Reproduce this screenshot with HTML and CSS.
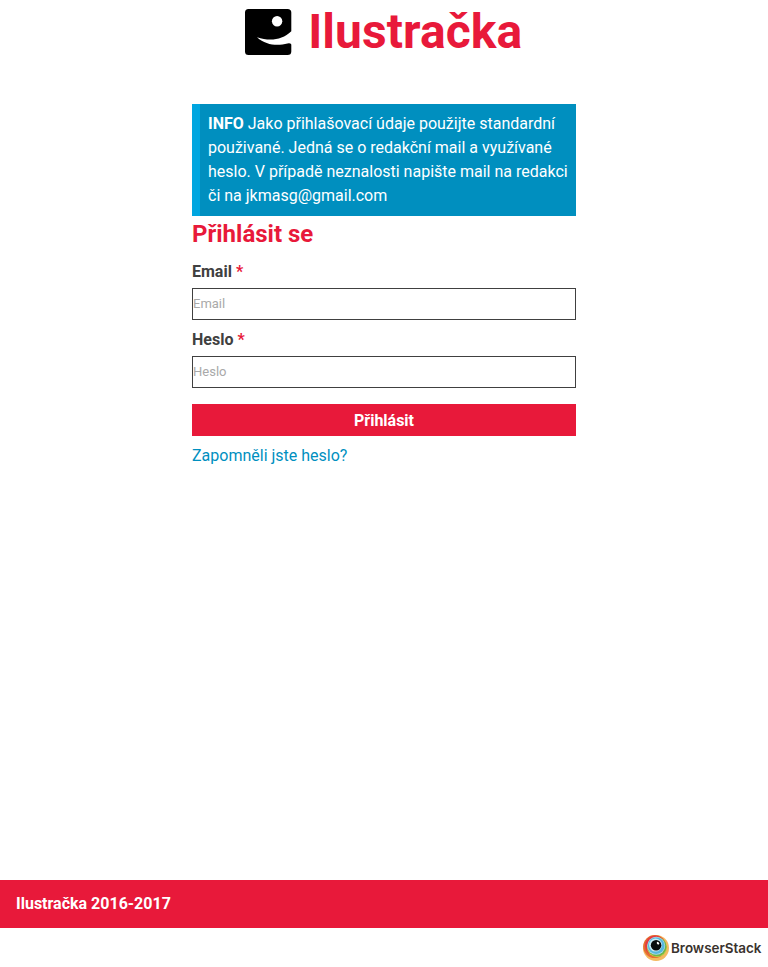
FILE: index.html
```html
<!DOCTYPE html>
<html lang="cs">
<head>
<meta charset="utf-8">
<title>Ilustračka</title>
<link rel="stylesheet" href="styles.css">
</head>
<body>
<header class="header">
  <svg class="logo" viewBox="0 0 48 48" aria-hidden="true">
    <path d="M4 1H43.500Q47.300 1 47.300 4.500V23.200C38 32 26 33.500 13 29.200C22 37.500 34 38 43.500 35.400Q46.500 34.800 47.300 36.500V43.500Q47.300 47 43.500 47H4.500Q1 47 1 43.500V4.500Q1 1 4.500 1Z" fill="#000"/>
    <circle cx="33.100" cy="13.200" r="5.200" fill="#fff"/>
  </svg>
  <h1 class="title">Ilustračka</h1>
</header>
<main class="main">
  <p class="info"><strong>INFO</strong> Jako přihlašovací údaje použijte standardní použivané. Jedná se o redakční mail a využívané heslo. V případě neznalosti napište mail na redakci či na jkmasg@gmail.com</p>
  <h2 class="heading">Přihlásit se</h2>
  <form class="form">
    <label class="label" for="email">Email <span class="required">*</span></label>
    <input class="input" id="email" type="email" placeholder="Email">
    <label class="label" for="password">Heslo <span class="required">*</span></label>
    <input class="input" id="password" type="password" placeholder="Heslo">
    <button class="submit" type="button">Přihlásit</button>
  </form>
  <a class="forgot" href="#">Zapomněli jste heslo?</a>
</main>
<footer class="footer">Ilustračka 2016-2017</footer>
<div class="sponsor">
  <svg class="sponsor-logo" viewBox="0 0 128 39" role="img" aria-label="BrowserStack">
    <circle cx="16" cy="20" r="13" fill="#f4b960"/>
    <circle cx="14.700" cy="18.600" r="11.500" fill="#e66f32"/>
    <circle cx="15.300" cy="17.800" r="10.300" fill="#e43c41"/>
    <circle cx="17" cy="19.300" r="10" fill="#bdd041"/>
    <circle cx="17" cy="18.700" r="9.500" fill="#6db54c"/>
    <circle cx="16.200" cy="17.800" r="9" fill="#aedaeb"/>
    <circle cx="16.200" cy="17.700" r="8.300" fill="#56b8de"/>
    <circle cx="15.500" cy="17.100" r="6.500" fill="#c8e9f4"/>
    <circle cx="16.100" cy="17.300" r="5.300" fill="#080b0d"/>
    <ellipse cx="18" cy="15.200" rx="1.500" ry="1" transform="rotate(45 18 15.200)" fill="#fff"/>
    <text class="sponsor-name" x="31" y="24.600" textLength="90.500" lengthAdjust="spacingAndGlyphs">BrowserStack</text>
  </svg>
</div>
</body>
</html>
```
FILE: styles.css
```css
* {
  box-sizing: border-box;
}

body {
  margin: 0;
  min-height: 967px;
  display: flex;
  flex-direction: column;
  background: #fff;
  color: #404040;
  font: 16px/24px Roboto, sans-serif;
}

.header {
  height: 64px;
  padding-right: 1.5px;
  display: flex;
  align-items: center;
  justify-content: center;
  gap: 16px;
}

.logo {
  width: 48px;
  height: 48px;
}

.title {
  margin: 0;
  color: #e8193a;
  font-size: 48px;
  line-height: 64px;
  font-weight: 700;
  letter-spacing: 0.08px;
}

.main {
  width: 384px;
  margin: 40px auto 0;
  flex: 1;
}

.info {
  margin: 0;
  padding: 8px 0 8px 8px;
  border-left: 8px solid #00a6e0;
  background: #008fbf;
  color: #fff;
}

.heading {
  margin: 0;
  color: #e8193a;
  font-size: 24px;
  line-height: 36px;
}

.form {
  display: flex;
  flex-direction: column;
  padding-top: 8px;
}

.label {
  margin-bottom: 4px;
  font-weight: 700;
}

.required {
  color: #e8193a;
}

.input {
  width: 100%;
  height: 32px;
  margin: 0 0 8px;
  padding: 0 0 1px;
  border: 1px solid #404040;
  border-radius: 0;
  font: 13px Roboto, sans-serif;
}

.input::placeholder {
  color: #a9a9a9;
}

.submit {
  height: 32px;
  margin: 8px 0;
  padding: 0;
  border: 0;
  background: #e8193a;
  color: #fff;
  font: 700 16px Roboto, sans-serif;
}

.forgot {
  display: block;
  color: #008fbf;
  text-decoration: none;
}

.footer {
  height: 48px;
  padding: 12px 16px;
  background: #e8193a;
  color: #fff;
  font-weight: 700;
}

.sponsor {
  height: 39px;
  display: flex;
  justify-content: flex-end;
}

.sponsor-logo {
  width: 128px;
  height: 39px;
}

.sponsor-name {
  fill: #39322d;
  font: 600 13.500px Inter, sans-serif;
}
```
